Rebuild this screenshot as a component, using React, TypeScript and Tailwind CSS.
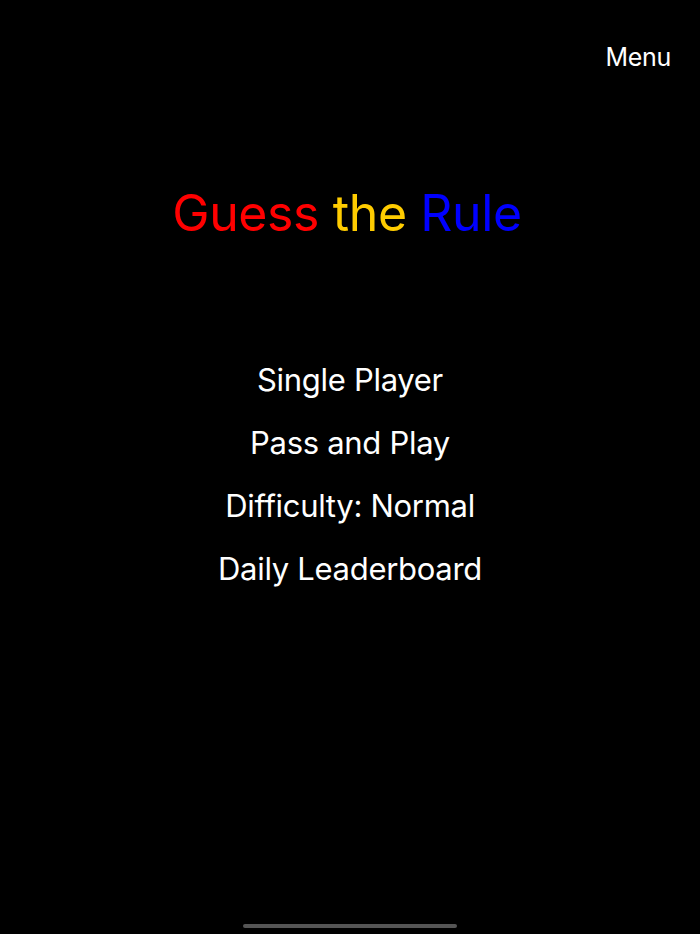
const menuItems = ['Single Player', 'Pass and Play', 'Difficulty: Normal', 'Daily Leaderboard']

function Title() {
  return (
    <h1 className="text-center pr-[6px] text-[50px] leading-[60px] tracking-[-0.4px]">
      <span className="text-[#ff0000]">Guess</span>{' '}
      <span className="text-[#ffcc00]">the</span>{' '}
      <span className="text-[#0000ff]">Rule</span>
    </h1>
  )
}

export default function App() {
  return (
    <div
      className="h-[934px] bg-black text-white flex flex-col overflow-hidden"
      style={{ fontFamily: 'Inter, "Noto Sans", sans-serif' }}
    >
      {/* top bar */}
      <div className="flex justify-end pt-[42px] pr-[29px]">
        <button className="text-[25px] leading-[30px] tracking-[-0.3px] text-white">Menu</button>
      </div>

      <div className="mt-[111px]">
        <Title />
      </div>

      <nav className="mt-[117px] flex flex-col items-center gap-[23px]">
        {menuItems.map((item) => (
          <button key={item} className="text-[31px] leading-[40px] tracking-[-0.3px] text-white">
            {item}
          </button>
        ))}
      </nav>

      <div className="flex-1" />

      {/* home indicator */}
      <div className="flex justify-center pb-[6px]">
        <div className="w-[214px] h-[4px] rounded-full bg-[#555555]" />
      </div>
    </div>
  )
}
